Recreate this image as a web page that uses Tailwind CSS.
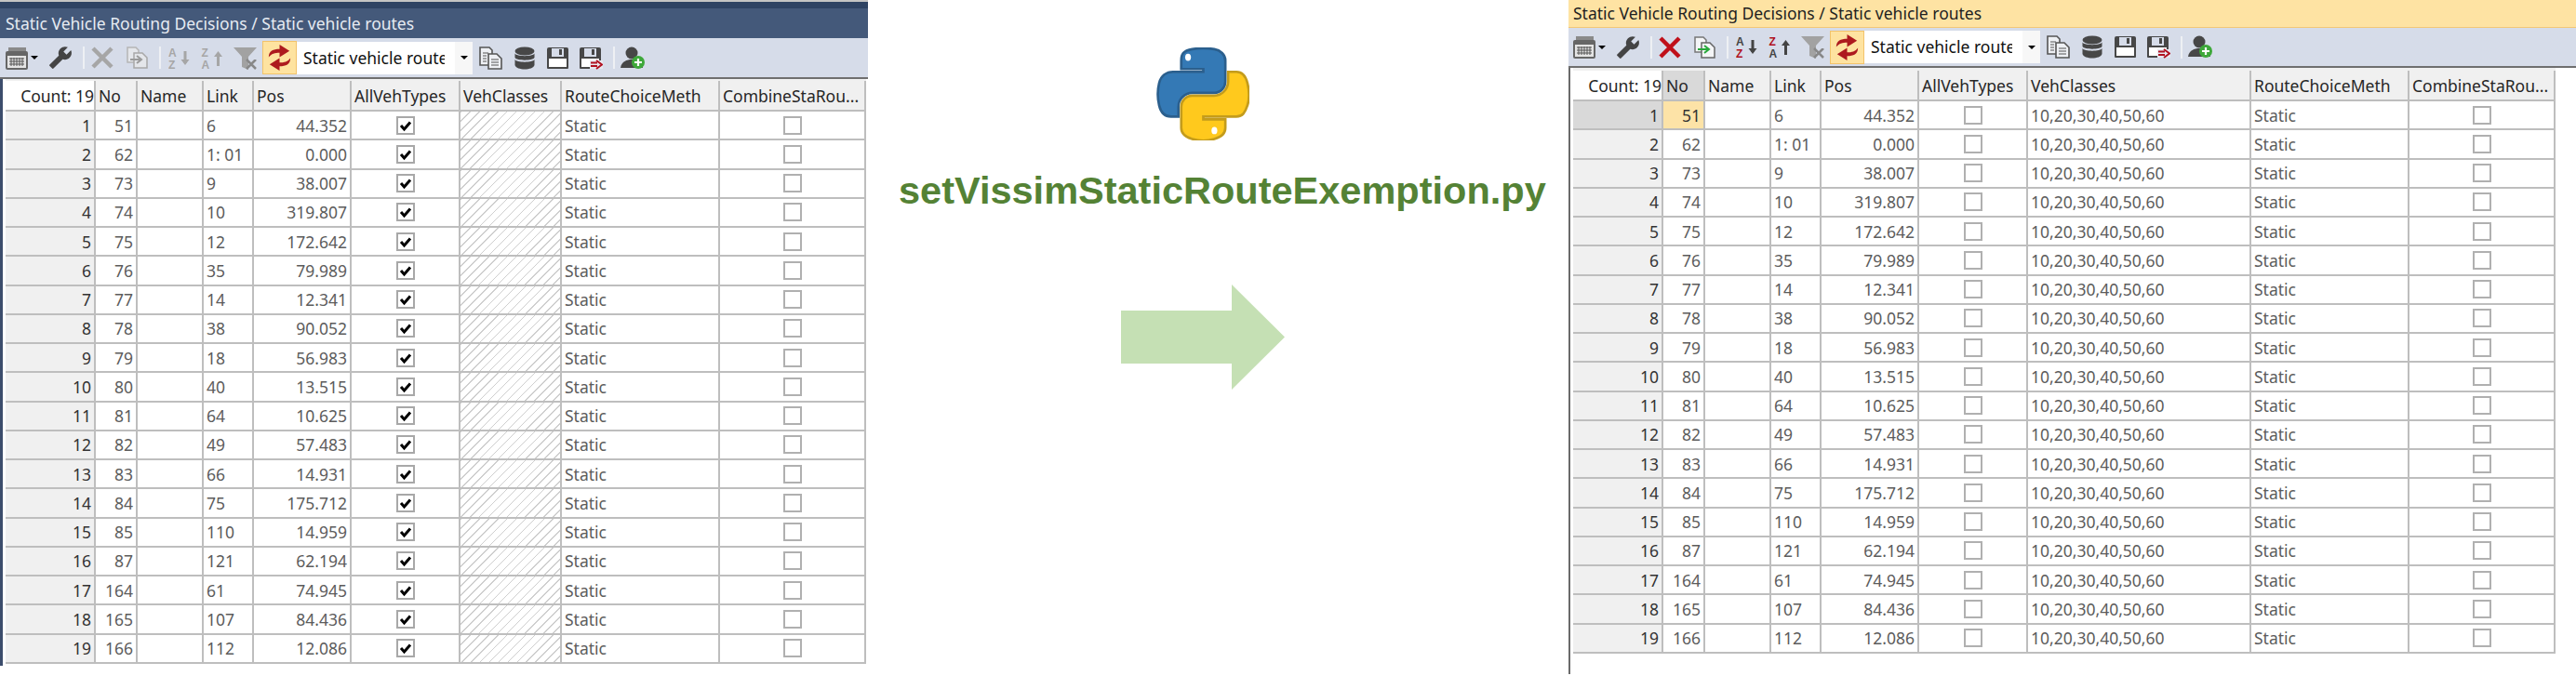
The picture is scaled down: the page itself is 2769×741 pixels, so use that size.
<!DOCTYPE html>
<html>
<head>
<meta charset="utf-8">
<script src="https://cdn.jsdelivr.net/npm/@tailwindcss/browser@4"></script>
</head>
<body class="bg-white">
<svg class="hidden">
  <symbol id="grid" viewBox="0 0 26 25"><path d="M4 1h19v4H4z" fill="#8a8a8a"/><rect x="1" y="5" width="24" height="20" rx="2" fill="#666"/><rect x="3" y="10" width="20" height="13" fill="#e4e4e4"/><path d="M5 13h16M5 16h16M5 19h16" stroke="#555" stroke-width="1"/><path d="M7 12v9M10 12v9M13 12v9M16 12v9M19 12v9" stroke="#555" stroke-width="1"/></symbol>
  <symbol id="wrench" viewBox="0 0 24 24"><g transform="translate(24 0) scale(-1 1)"><path d="M22.7 19l-9.1-9.1c.9-2.3.4-5-1.5-6.9-2-2-5-2.4-7.4-1.3L9 6 6 9 1.6 4.7C.4 7.1.9 10.1 2.9 12.1c1.9 1.9 4.6 2.4 6.9 1.5l9.1 9.1c.4.4 1 .4 1.4 0l2.3-2.3c.5-.4.5-1.1.1-1.4z" fill="#444"/></g></symbol>
  <symbol id="x" viewBox="0 0 24 24"><path d="M2 2L22 22M22 2L2 22" stroke="currentColor" stroke-width="4.5"/></symbol>
  <symbol id="swap" viewBox="0 0 36 35"><path d="M6 17C6 10 11 8 18 8V3L29 10 18 17V12C13 12 9 13 6 17z" fill="#ad1a1e"/><path d="M30 18C30 25 25 27 18 27V32L7 25 18 18V23C23 23 27 22 30 18z" fill="#ad1a1e"/></symbol>
  <symbol id="filter" viewBox="0 0 25 25"><path d="M0 1H25L16 11V25L9 22V11z" fill="#a2a2a2"/><path d="M14 14L24 24M24 14L14 24" stroke="#888" stroke-width="2.5"/><path d="M17 12h8v2h-8z" fill="#d6dce9"/></symbol>
  <symbol id="docs" viewBox="0 0 26 25"><path d="M2 1h10l3 3v16H2z" fill="#eef0f4" stroke="#555" stroke-width="1.6"/><path d="M11 8h9l5 5v11H11z" fill="#eef0f4" stroke="#555" stroke-width="1.6"/><path d="M5 7h6M5 10h4M5 13h4M5 16h4M14 14h8M14 17h8M14 20h8" stroke="#555" stroke-width="1.2"/></symbol>
  <symbol id="db" viewBox="0 0 22 25"><ellipse cx="11" cy="5" rx="10.5" ry="4.5" fill="#474747"/><path d="M.5 7.5C2 11 20 11 21.5 7.5V12C20 15.5 2 15.5 .5 12z" fill="#474747"/><path d="M.5 14C2 17.5 20 17.5 21.5 14V20C20 26 2 26 .5 20z" fill="#474747"/></symbol>
  <symbol id="save" viewBox="0 0 25 25"><path d="M1 3q0-2 2-2h19q2 0 2 2v20q0 1-1 1H2q-1 0-1-1z" fill="#474747"/><path d="M3 13h19v9H3z" fill="#fff"/><path d="M6 2h13v9H6z" fill="#d6dce9"/><path d="M14 3h3v6h-3z" fill="#474747"/></symbol>
  <symbol id="saveas" viewBox="0 0 26 25"><path d="M1 3q0-2 2-2h19q2 0 2 2v20q0 1-1 1H2q-1 0-1-1z" fill="#474747"/><path d="M3 13h19v9H3z" fill="#fff"/><path d="M6 2h13v9H6z" fill="#d6dce9"/><path d="M14 3h3v6h-3z" fill="#474747"/><path d="M12 15h14v9H12z" fill="#e8e8f0"/><path d="M13 17.5h7M13 21h7" stroke="#b01020" stroke-width="2"/><path d="M19 15l6 4.5-6 4.5" fill="none" stroke="#b01020" stroke-width="2"/></symbol>
  <symbol id="user" viewBox="0 0 26 25"><circle cx="12" cy="7" r="6.5" fill="#474747"/><path d="M0 23C1 16 7 14 12 14s11 2 12 9z" fill="#474747"/><circle cx="19" cy="17" r="7" fill="#3ea83a"/><path d="M19 13v8M15 17h8" stroke="#fff" stroke-width="2.2"/></symbol>
  <symbol id="on" viewBox="0 0 20 20"><rect x="1" y="1" width="18" height="18" fill="#fff" stroke="#a8a8a8" stroke-width="2"/><path d="M5 10l3.5 4L15 6.500" fill="none" stroke="#000" stroke-width="3"/></symbol>
  <symbol id="off" viewBox="0 0 20 20"><rect x="1" y="1" width="18" height="18" fill="#fff" stroke="#b0b0b0" stroke-width="2"/></symbol>
</svg>

<div class="flex w-[2769px] h-[741px] overflow-hidden bg-white font-['Noto_Sans',sans-serif] text-[17.5px]">

  <!-- left window -->
  <div class="w-[933px] h-[716px] shrink-0 flex flex-col">
    <div class="h-[2px] bg-[#c4c4c4]"></div>
    <div class="h-[7px] bg-[#2e4363]"></div>
    <div class="h-[32px] bg-[#44597a] text-[#e6ebf2] pl-[6px] flex items-center"><span>Static Vehicle Routing Decisions / Static vehicle routes</span></div>
    <div class="h-[42px] bg-[#d6dce9] flex items-center pl-[5px]">
      <svg class="w-[26px] h-[25px]"><use href="#grid"/></svg>
      <div class="ml-[2px] w-0 h-0 border-x-[4px] border-x-transparent border-t-[4px] border-t-black"></div>
      <svg class="ml-[11px] w-[26px] h-[26px]"><use href="#wrench"/></svg>
      <div class="ml-[11px] w-[2px] h-[24px] bg-[#eef0f4]"></div>
      <svg class="ml-[7px] w-[24px] h-[24px] text-[#a6a6a6]"><use href="#x"/></svg>
      <svg class="ml-[13px] w-[24px] h-[24px]" viewBox="0 0 24 24"><path d="M2 1h9l3 3v13H2z" fill="#e4e6ea" stroke="#b5b5b5" stroke-width="1.5"/><path d="M9 7h9l5 5v11H9z" fill="#e4e6ea" stroke="#a8a8a8" stroke-width="1.500"/><path d="M5 14h11M12 10l5 4-5 4" fill="none" stroke="#9a9a9a" stroke-width="2"/></svg>
      <div class="ml-[12px] w-[2px] h-[24px] bg-[#eef0f4]"></div>
      <svg class="ml-[8px] w-[24px] h-[25px]" viewBox="0 0 24 25"><text x="0" y="10.500" font-size="12" font-weight="700" font-family="Liberation Sans" fill="#a6a6a6">A</text><text x="0" y="23.500" font-size="12" font-weight="700" font-family="Liberation Sans" fill="#a6a6a6">Z</text><path d="M18 5v13" stroke="#a6a6a6" stroke-width="3"/><path d="M13.500 14l4.500 6 4.500-6z" fill="#a6a6a6"/></svg>
      <svg class="ml-[11px] w-[25px] h-[25px]" viewBox="0 0 24 25"><text x="0" y="10.500" font-size="12" font-weight="700" font-family="Liberation Sans" fill="#a6a6a6">Z</text><text x="0" y="23.500" font-size="12" font-weight="700" font-family="Liberation Sans" fill="#a6a6a6">A</text><path d="M18 21V8" stroke="#a6a6a6" stroke-width="3"/><path d="M13.500 11l4.500-6 4.500 6z" fill="#a6a6a6"/></svg>
      <svg class="ml-[10px] w-[25px] h-[25px]"><use href="#filter"/></svg>
      <svg class="ml-[6px] w-[37px] h-[36px] bg-[#fee3a0] border border-[#f2c36b]"><use href="#swap"/></svg>
      <div class="w-[189px] h-[35px] bg-white flex items-center">
        <span class="ml-[7px] w-[152px] overflow-hidden whitespace-nowrap text-[#111]">Static vehicle route</span>
        <span class="ml-[11px] w-[19px] h-full bg-[#f7f7f7] flex items-center justify-center"><span class="w-0 h-0 border-x-[4px] border-x-transparent border-t-[4px] border-t-black"></span></span>
      </div>
      <svg class="ml-[6px] w-[26px] h-[25px]"><use href="#docs"/></svg>
      <svg class="ml-[13px] w-[22px] h-[25px]"><use href="#db"/></svg>
      <svg class="ml-[12px] w-[25px] h-[25px]"><use href="#save"/></svg>
      <svg class="ml-[10px] w-[26px] h-[25px]"><use href="#saveas"/></svg>
      <div class="ml-[11px] w-[2px] h-[24px] bg-[#eef0f4]"></div>
      <svg class="ml-[6px] w-[26px] h-[25px]"><use href="#user"/></svg>
    </div>
    <div class="h-[2px] bg-[#6f6f6f]"></div>
    <div class="flex-1 border-l-[3px] border-[#3c4d6c] pl-[3px]">
      <div class="h-[2px] bg-[#f0f0f0] w-[925px]"></div>
      <table class="table-fixed border-separate border-spacing-0 w-[925px] leading-5 text-[#5c5c5c] [&_th]:bg-[#f0f0f0] [&_th]:font-normal [&_th]:text-left [&_th]:text-[#262626] [&_th:first-child]:bg-white [&_th:first-child]:text-right [&_th]:h-[33px] [&_th]:border-r-2 [&_th]:border-b-2 [&_th]:border-[#bebebe] [&_th]:pl-[3px] [&_th]:pr-0 [&_th]:whitespace-nowrap [&_th]:overflow-hidden [&_td]:border-r-2 [&_td]:border-b-2 [&_td]:border-[#bebebe] [&_td]:px-[3px] [&_td]:whitespace-nowrap [&_td]:overflow-hidden [&_tbody_tr]:h-[31.26px] [&_td:nth-child(1)]:bg-[#f0f0f0] [&_td:nth-child(1)]:text-right [&_td:nth-child(1)]:text-[#333] [&_td:nth-child(2)]:text-right [&_td:nth-child(5)]:text-right [&_td:nth-child(7)]:bg-[repeating-linear-gradient(135deg,#cfcfcf_0,#cfcfcf_1px,#fff_1px,#fff_7px)]">
        <colgroup><col class="w-[97px]"><col class="w-[45px]"><col class="w-[71px]"><col class="w-[54px]"><col class="w-[105px]"><col class="w-[117px]"><col class="w-[109px]"><col class="w-[170px]"><col class="w-[157px]"></colgroup>
        <thead><tr><th>Count: 19</th><th>No</th><th>Name</th><th>Link</th><th>Pos</th><th>AllVehTypes</th><th>VehClasses</th><th>RouteChoiceMeth</th><th>CombineStaRou...</th></tr></thead>
        <tbody>
          <tr><td>1</td><td>51</td><td></td><td>6</td><td>44.352</td><td><svg class="w-5 h-5 mx-auto"><use href="#on"/></svg></td><td></td><td>Static</td><td><svg class="w-5 h-5 mx-auto"><use href="#off"/></svg></td></tr>
          <tr><td>2</td><td>62</td><td></td><td>1: 01</td><td>0.000</td><td><svg class="w-5 h-5 mx-auto"><use href="#on"/></svg></td><td></td><td>Static</td><td><svg class="w-5 h-5 mx-auto"><use href="#off"/></svg></td></tr>
          <tr><td>3</td><td>73</td><td></td><td>9</td><td>38.007</td><td><svg class="w-5 h-5 mx-auto"><use href="#on"/></svg></td><td></td><td>Static</td><td><svg class="w-5 h-5 mx-auto"><use href="#off"/></svg></td></tr>
          <tr><td>4</td><td>74</td><td></td><td>10</td><td>319.807</td><td><svg class="w-5 h-5 mx-auto"><use href="#on"/></svg></td><td></td><td>Static</td><td><svg class="w-5 h-5 mx-auto"><use href="#off"/></svg></td></tr>
          <tr><td>5</td><td>75</td><td></td><td>12</td><td>172.642</td><td><svg class="w-5 h-5 mx-auto"><use href="#on"/></svg></td><td></td><td>Static</td><td><svg class="w-5 h-5 mx-auto"><use href="#off"/></svg></td></tr>
          <tr><td>6</td><td>76</td><td></td><td>35</td><td>79.989</td><td><svg class="w-5 h-5 mx-auto"><use href="#on"/></svg></td><td></td><td>Static</td><td><svg class="w-5 h-5 mx-auto"><use href="#off"/></svg></td></tr>
          <tr><td>7</td><td>77</td><td></td><td>14</td><td>12.341</td><td><svg class="w-5 h-5 mx-auto"><use href="#on"/></svg></td><td></td><td>Static</td><td><svg class="w-5 h-5 mx-auto"><use href="#off"/></svg></td></tr>
          <tr><td>8</td><td>78</td><td></td><td>38</td><td>90.052</td><td><svg class="w-5 h-5 mx-auto"><use href="#on"/></svg></td><td></td><td>Static</td><td><svg class="w-5 h-5 mx-auto"><use href="#off"/></svg></td></tr>
          <tr><td>9</td><td>79</td><td></td><td>18</td><td>56.983</td><td><svg class="w-5 h-5 mx-auto"><use href="#on"/></svg></td><td></td><td>Static</td><td><svg class="w-5 h-5 mx-auto"><use href="#off"/></svg></td></tr>
          <tr><td>10</td><td>80</td><td></td><td>40</td><td>13.515</td><td><svg class="w-5 h-5 mx-auto"><use href="#on"/></svg></td><td></td><td>Static</td><td><svg class="w-5 h-5 mx-auto"><use href="#off"/></svg></td></tr>
          <tr><td>11</td><td>81</td><td></td><td>64</td><td>10.625</td><td><svg class="w-5 h-5 mx-auto"><use href="#on"/></svg></td><td></td><td>Static</td><td><svg class="w-5 h-5 mx-auto"><use href="#off"/></svg></td></tr>
          <tr><td>12</td><td>82</td><td></td><td>49</td><td>57.483</td><td><svg class="w-5 h-5 mx-auto"><use href="#on"/></svg></td><td></td><td>Static</td><td><svg class="w-5 h-5 mx-auto"><use href="#off"/></svg></td></tr>
          <tr><td>13</td><td>83</td><td></td><td>66</td><td>14.931</td><td><svg class="w-5 h-5 mx-auto"><use href="#on"/></svg></td><td></td><td>Static</td><td><svg class="w-5 h-5 mx-auto"><use href="#off"/></svg></td></tr>
          <tr><td>14</td><td>84</td><td></td><td>75</td><td>175.712</td><td><svg class="w-5 h-5 mx-auto"><use href="#on"/></svg></td><td></td><td>Static</td><td><svg class="w-5 h-5 mx-auto"><use href="#off"/></svg></td></tr>
          <tr><td>15</td><td>85</td><td></td><td>110</td><td>14.959</td><td><svg class="w-5 h-5 mx-auto"><use href="#on"/></svg></td><td></td><td>Static</td><td><svg class="w-5 h-5 mx-auto"><use href="#off"/></svg></td></tr>
          <tr><td>16</td><td>87</td><td></td><td>121</td><td>62.194</td><td><svg class="w-5 h-5 mx-auto"><use href="#on"/></svg></td><td></td><td>Static</td><td><svg class="w-5 h-5 mx-auto"><use href="#off"/></svg></td></tr>
          <tr><td>17</td><td>164</td><td></td><td>61</td><td>74.945</td><td><svg class="w-5 h-5 mx-auto"><use href="#on"/></svg></td><td></td><td>Static</td><td><svg class="w-5 h-5 mx-auto"><use href="#off"/></svg></td></tr>
          <tr><td>18</td><td>165</td><td></td><td>107</td><td>84.436</td><td><svg class="w-5 h-5 mx-auto"><use href="#on"/></svg></td><td></td><td>Static</td><td><svg class="w-5 h-5 mx-auto"><use href="#off"/></svg></td></tr>
          <tr><td>19</td><td>166</td><td></td><td>112</td><td>12.086</td><td><svg class="w-5 h-5 mx-auto"><use href="#on"/></svg></td><td></td><td>Static</td><td><svg class="w-5 h-5 mx-auto"><use href="#off"/></svg></td></tr>
        </tbody>
      </table>
    </div>
  </div>

  <!-- centre -->
  <div class="w-[753px] shrink-0 pt-[51px]">
    <svg class="ml-[310px] w-[100px] h-[100px]" viewBox="-1 -1 112 113">
      <path d="M54.919 0.001c-4.584.022-8.961.413-12.813 1.095C30.76 3.1 28.7 7.298 28.7 15.032V25.25h26.812v3.406H18.638c-7.792 0-14.616 4.684-16.75 13.594-2.462 10.213-2.571 16.586 0 27.25 1.906 7.938 6.458 13.594 14.25 13.594h9.219V70.844c0-8.85 7.657-16.656 16.75-16.656h26.781c7.455 0 13.406-6.138 13.406-13.625V15.032c0-7.266-6.13-12.725-13.406-13.937C64.282.328 59.502-.02 54.919.001z" fill="#3479b5" stroke="#2b5f8d" stroke-width="3"/>
      <ellipse cx="37" cy="11" rx="3.500" ry="4.500" fill="#fff"/>
      <path d="M85.638 28.657v11.906c0 9.231-7.826 17-16.75 17H42.106c-7.336 0-13.406 6.278-13.406 13.625v25.531c0 7.266 6.319 11.54 13.406 13.625 8.487 2.496 16.626 2.947 26.781 0 6.75-1.954 13.406-5.888 13.406-13.625V86.501H55.513v-3.406h40.187c7.792 0 10.696-5.435 13.406-13.594 2.799-8.399 2.68-16.476 0-27.25-1.926-7.757-5.604-13.594-13.406-13.594H85.638z" fill="#ffc91d" stroke="#c49c1b" stroke-width="3"/>
      <ellipse cx="69" cy="100" rx="3.500" ry="4.500" fill="#fff"/>
    </svg>
    <div class="mt-[33px] ml-[33px] font-['Liberation_Sans',Arial,sans-serif] font-bold text-[41.5px] leading-none text-[#548235] whitespace-nowrap">setVissimStaticRouteExemption.py</div>
    <svg class="mt-[80px] ml-[272px] w-[176px] h-[113px]" viewBox="0 0 176 113"><polygon points="0,28 119,28 119,0 176,56.500 119,113 119,85 0,85" fill="#c5e0b4"/></svg>
  </div>

  <!-- right window -->
  <div class="flex-1 h-[725px] flex flex-col">
    <div class="h-[30px] bg-[#fee3a3] border-b border-[#f2c777] text-[#1f1f1f] pl-[5px] flex items-center"><span>Static Vehicle Routing Decisions / Static vehicle routes</span></div>
    <div class="h-[41px] bg-[#d6dce9] flex items-center pl-[4px]">
      <svg class="w-[26px] h-[25px]"><use href="#grid"/></svg>
      <div class="ml-[2px] w-0 h-0 border-x-[4px] border-x-transparent border-t-[4px] border-t-black"></div>
      <svg class="ml-[11px] w-[26px] h-[26px]"><use href="#wrench"/></svg>
      <div class="ml-[11px] w-[2px] h-[24px] bg-[#eef0f4]"></div>
      <svg class="ml-[7px] w-[24px] h-[24px] text-[#c0101a]"><use href="#x"/></svg>
      <svg class="ml-[13px] w-[24px] h-[24px]" viewBox="0 0 24 24"><path d="M2 1h9l3 3v13H2z" fill="#f4f5f7" stroke="#777" stroke-width="1.500"/><path d="M9 7h9l5 5v11H9z" fill="#f4f5f7" stroke="#666" stroke-width="1.500"/><path d="M5 14h11M12 10l5 4-5 4" fill="none" stroke="#27a83a" stroke-width="2"/></svg>
      <div class="ml-[12px] w-[2px] h-[24px] bg-[#eef0f4]"></div>
      <svg class="ml-[8px] w-[24px] h-[25px]" viewBox="0 0 24 25"><text x="0" y="10.500" font-size="12" font-weight="700" font-family="Liberation Sans" fill="#444">A</text><text x="0" y="23.500" font-size="12" font-weight="700" font-family="Liberation Sans" fill="#b01020">Z</text><path d="M18 5v13" stroke="#444" stroke-width="3"/><path d="M13.500 14l4.500 6 4.500-6z" fill="#444"/></svg>
      <svg class="ml-[11px] w-[25px] h-[25px]" viewBox="0 0 24 25"><text x="0" y="10.500" font-size="12" font-weight="700" font-family="Liberation Sans" fill="#b01020">Z</text><text x="0" y="23.500" font-size="12" font-weight="700" font-family="Liberation Sans" fill="#444">A</text><path d="M18 21V8" stroke="#444" stroke-width="3"/><path d="M13.500 11l4.500-6 4.500 6z" fill="#444"/></svg>
      <svg class="ml-[10px] w-[25px] h-[25px]"><use href="#filter"/></svg>
      <svg class="ml-[6px] w-[37px] h-[36px] bg-[#fee3a0] border border-[#f2c36b]"><use href="#swap"/></svg>
      <div class="w-[189px] h-[35px] bg-white flex items-center">
        <span class="ml-[7px] w-[152px] overflow-hidden whitespace-nowrap text-[#111]">Static vehicle route</span>
        <span class="ml-[11px] w-[19px] h-full bg-[#f7f7f7] flex items-center justify-center"><span class="w-0 h-0 border-x-[4px] border-x-transparent border-t-[4px] border-t-black"></span></span>
      </div>
      <svg class="ml-[6px] w-[26px] h-[25px]"><use href="#docs"/></svg>
      <svg class="ml-[13px] w-[22px] h-[25px]"><use href="#db"/></svg>
      <svg class="ml-[12px] w-[25px] h-[25px]"><use href="#save"/></svg>
      <svg class="ml-[10px] w-[26px] h-[25px]"><use href="#saveas"/></svg>
      <div class="ml-[11px] w-[2px] h-[24px] bg-[#eef0f4]"></div>
      <svg class="ml-[6px] w-[26px] h-[25px]"><use href="#user"/></svg>
    </div>
    <div class="h-[2px] bg-[#6f6f6f]"></div>
    <div class="flex-1 border-l-2 border-[#6a6a6a] pl-[3px]">
      <div class="h-[3px] bg-[#f0f0f0] w-[1056px]"></div>
      <table class="table-fixed border-separate border-spacing-0 w-[1056px] leading-5 text-[#5c5c5c] [&_th]:bg-[#f0f0f0] [&_th]:font-normal [&_th]:text-left [&_th]:text-[#262626] [&_th:first-child]:bg-white [&_th:first-child]:text-right [&_th:nth-child(2)]:bg-[#d9d9d9] [&_th]:h-[33px] [&_th]:border-r-2 [&_th]:border-b-2 [&_th]:border-[#bebebe] [&_th]:pl-[3px] [&_th]:pr-0 [&_th]:whitespace-nowrap [&_th]:overflow-hidden [&_td]:border-r-2 [&_td]:border-b-2 [&_td]:border-[#bebebe] [&_td]:px-[3px] [&_td]:whitespace-nowrap [&_td]:overflow-hidden [&_tbody_tr]:h-[31.26px] [&_td:nth-child(1)]:bg-[#f0f0f0] [&_td:nth-child(1)]:text-right [&_td:nth-child(1)]:text-[#333] [&_td:nth-child(2)]:text-right [&_td:nth-child(5)]:text-right">
        <colgroup><col class="w-[97px]"><col class="w-[45px]"><col class="w-[71px]"><col class="w-[54px]"><col class="w-[105px]"><col class="w-[117px]"><col class="w-[240px]"><col class="w-[170px]"><col class="w-[157px]"></colgroup>
        <thead><tr><th>Count: 19</th><th>No</th><th>Name</th><th>Link</th><th>Pos</th><th>AllVehTypes</th><th>VehClasses</th><th>RouteChoiceMeth</th><th>CombineStaRou...</th></tr></thead>
        <tbody>
          <tr><td class="!bg-[#d9d9d9]">1</td><td class="bg-[#fde3a7] !text-[#333]">51</td><td></td><td>6</td><td>44.352</td><td><svg class="w-5 h-5 mx-auto"><use href="#off"/></svg></td><td>10,20,30,40,50,60</td><td>Static</td><td><svg class="w-5 h-5 mx-auto"><use href="#off"/></svg></td></tr>
          <tr><td>2</td><td>62</td><td></td><td>1: 01</td><td>0.000</td><td><svg class="w-5 h-5 mx-auto"><use href="#off"/></svg></td><td>10,20,30,40,50,60</td><td>Static</td><td><svg class="w-5 h-5 mx-auto"><use href="#off"/></svg></td></tr>
          <tr><td>3</td><td>73</td><td></td><td>9</td><td>38.007</td><td><svg class="w-5 h-5 mx-auto"><use href="#off"/></svg></td><td>10,20,30,40,50,60</td><td>Static</td><td><svg class="w-5 h-5 mx-auto"><use href="#off"/></svg></td></tr>
          <tr><td>4</td><td>74</td><td></td><td>10</td><td>319.807</td><td><svg class="w-5 h-5 mx-auto"><use href="#off"/></svg></td><td>10,20,30,40,50,60</td><td>Static</td><td><svg class="w-5 h-5 mx-auto"><use href="#off"/></svg></td></tr>
          <tr><td>5</td><td>75</td><td></td><td>12</td><td>172.642</td><td><svg class="w-5 h-5 mx-auto"><use href="#off"/></svg></td><td>10,20,30,40,50,60</td><td>Static</td><td><svg class="w-5 h-5 mx-auto"><use href="#off"/></svg></td></tr>
          <tr><td>6</td><td>76</td><td></td><td>35</td><td>79.989</td><td><svg class="w-5 h-5 mx-auto"><use href="#off"/></svg></td><td>10,20,30,40,50,60</td><td>Static</td><td><svg class="w-5 h-5 mx-auto"><use href="#off"/></svg></td></tr>
          <tr><td>7</td><td>77</td><td></td><td>14</td><td>12.341</td><td><svg class="w-5 h-5 mx-auto"><use href="#off"/></svg></td><td>10,20,30,40,50,60</td><td>Static</td><td><svg class="w-5 h-5 mx-auto"><use href="#off"/></svg></td></tr>
          <tr><td>8</td><td>78</td><td></td><td>38</td><td>90.052</td><td><svg class="w-5 h-5 mx-auto"><use href="#off"/></svg></td><td>10,20,30,40,50,60</td><td>Static</td><td><svg class="w-5 h-5 mx-auto"><use href="#off"/></svg></td></tr>
          <tr><td>9</td><td>79</td><td></td><td>18</td><td>56.983</td><td><svg class="w-5 h-5 mx-auto"><use href="#off"/></svg></td><td>10,20,30,40,50,60</td><td>Static</td><td><svg class="w-5 h-5 mx-auto"><use href="#off"/></svg></td></tr>
          <tr><td>10</td><td>80</td><td></td><td>40</td><td>13.515</td><td><svg class="w-5 h-5 mx-auto"><use href="#off"/></svg></td><td>10,20,30,40,50,60</td><td>Static</td><td><svg class="w-5 h-5 mx-auto"><use href="#off"/></svg></td></tr>
          <tr><td>11</td><td>81</td><td></td><td>64</td><td>10.625</td><td><svg class="w-5 h-5 mx-auto"><use href="#off"/></svg></td><td>10,20,30,40,50,60</td><td>Static</td><td><svg class="w-5 h-5 mx-auto"><use href="#off"/></svg></td></tr>
          <tr><td>12</td><td>82</td><td></td><td>49</td><td>57.483</td><td><svg class="w-5 h-5 mx-auto"><use href="#off"/></svg></td><td>10,20,30,40,50,60</td><td>Static</td><td><svg class="w-5 h-5 mx-auto"><use href="#off"/></svg></td></tr>
          <tr><td>13</td><td>83</td><td></td><td>66</td><td>14.931</td><td><svg class="w-5 h-5 mx-auto"><use href="#off"/></svg></td><td>10,20,30,40,50,60</td><td>Static</td><td><svg class="w-5 h-5 mx-auto"><use href="#off"/></svg></td></tr>
          <tr><td>14</td><td>84</td><td></td><td>75</td><td>175.712</td><td><svg class="w-5 h-5 mx-auto"><use href="#off"/></svg></td><td>10,20,30,40,50,60</td><td>Static</td><td><svg class="w-5 h-5 mx-auto"><use href="#off"/></svg></td></tr>
          <tr><td>15</td><td>85</td><td></td><td>110</td><td>14.959</td><td><svg class="w-5 h-5 mx-auto"><use href="#off"/></svg></td><td>10,20,30,40,50,60</td><td>Static</td><td><svg class="w-5 h-5 mx-auto"><use href="#off"/></svg></td></tr>
          <tr><td>16</td><td>87</td><td></td><td>121</td><td>62.194</td><td><svg class="w-5 h-5 mx-auto"><use href="#off"/></svg></td><td>10,20,30,40,50,60</td><td>Static</td><td><svg class="w-5 h-5 mx-auto"><use href="#off"/></svg></td></tr>
          <tr><td>17</td><td>164</td><td></td><td>61</td><td>74.945</td><td><svg class="w-5 h-5 mx-auto"><use href="#off"/></svg></td><td>10,20,30,40,50,60</td><td>Static</td><td><svg class="w-5 h-5 mx-auto"><use href="#off"/></svg></td></tr>
          <tr><td>18</td><td>165</td><td></td><td>107</td><td>84.436</td><td><svg class="w-5 h-5 mx-auto"><use href="#off"/></svg></td><td>10,20,30,40,50,60</td><td>Static</td><td><svg class="w-5 h-5 mx-auto"><use href="#off"/></svg></td></tr>
          <tr><td>19</td><td>166</td><td></td><td>112</td><td>12.086</td><td><svg class="w-5 h-5 mx-auto"><use href="#off"/></svg></td><td>10,20,30,40,50,60</td><td>Static</td><td><svg class="w-5 h-5 mx-auto"><use href="#off"/></svg></td></tr>
        </tbody>
      </table>
    </div>
  </div>
</div>
</body>
</html>
